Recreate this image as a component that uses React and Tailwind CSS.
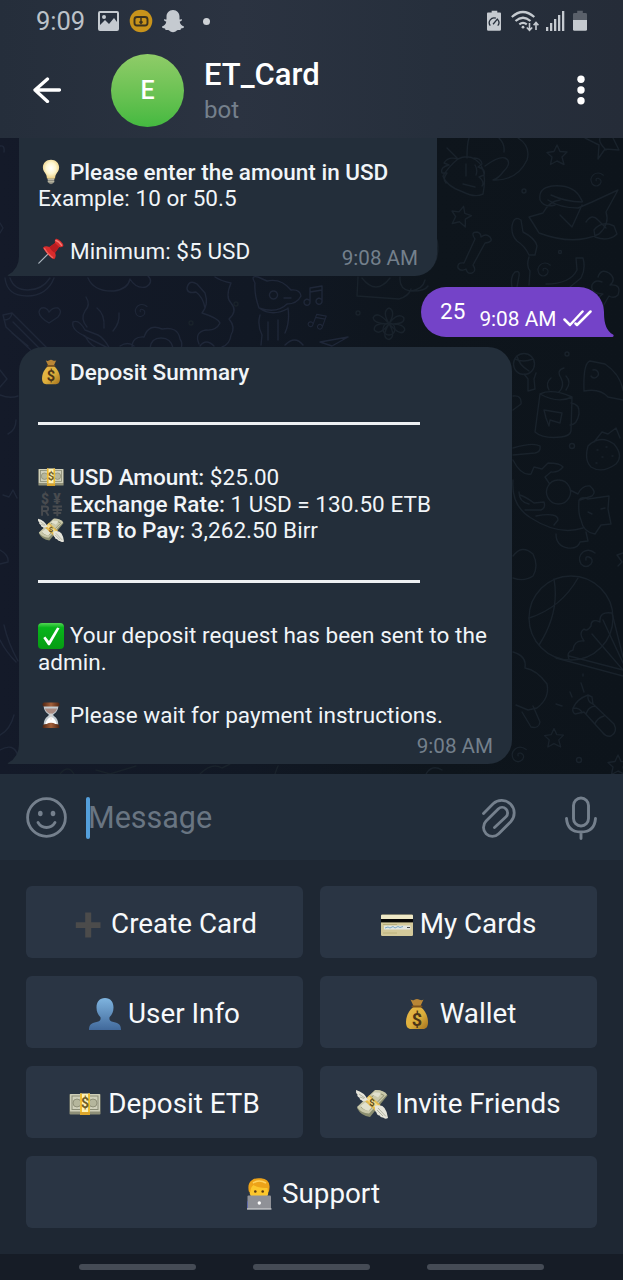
import React from 'react';

/* ---------- Emoji drawings (all on a 32 x 32 grid) ---------- */

function Emoji({ size, children }) {
  return (
    <svg
      aria-hidden="true"
      viewBox="0 0 32 32"
      className={size === 'lg' ? 'mt-1 h-8 w-8 shrink-0 overflow-visible' : 'h-[26px] w-[26px] shrink-0 overflow-visible'}
    >
      {children}
    </svg>
  );
}

function Bulb(props) {
  return (
    <Emoji {...props}>
      <defs>
        <radialGradient id="bulb" cx="0.5" cy="0.45" r="0.6">
          <stop offset="0" stopColor="#ffffff" />
          <stop offset="0.5" stopColor="#fdf6cf" />
          <stop offset="1" stopColor="#e9c877" />
        </radialGradient>
      </defs>
      <path d="M12 23h8v5q-1.500 3-4 3t-4-3z" fill="#8d8c80" />
      <path d="M12 25h8M12 28h8" stroke="#d0ccb4" strokeWidth="1" />
      <path d="M16 1c6 0 10 4 10 9.500 0 4-2.500 6-4 9-.7 1.500-.8 2.500-1 4.500H11c-.2-2-.3-3-1-4.500-1.500-3-4-5-4-9C6 5 10 1 16 1z" fill="url(#bulb)" />
    </Emoji>
  );
}

function Pushpin(props) {
  return (
    <Emoji {...props}>
      <path d="M13 19 1 31" stroke="#a9b4bd" strokeWidth="1.500" strokeLinecap="round" />
      <path d="M6 12q3-3 8-1l7-5q-1-3 1-5 2-1 6 3t3 6q-2 2-5 1l-5 7q2 5-1 8-3 0-8-6t-6-8z" fill="#d92c2c" />
      <path d="M14 11l7-5 5 5-5 7q-4-1-7-7z" fill="#b81c20" />
      <path d="M22 3q4 1 7 6" stroke="#f47a74" strokeWidth="1.800" fill="none" strokeLinecap="round" />
      <path d="M8 13q3 6 10 11" stroke="#f06660" strokeWidth="1.600" fill="none" strokeLinecap="round" />
    </Emoji>
  );
}

function MoneyBag(props) {
  return (
    <Emoji {...props}>
      <defs>
        <linearGradient id="bag" x1="0" y1="0" x2="1" y2="1">
          <stop offset="0" stopColor="#e9b94a" />
          <stop offset="0.55" stopColor="#dcae3b" />
          <stop offset="1" stopColor="#a2701d" />
        </linearGradient>
      </defs>
      <path d="M9.500 1.500q2 1.500 4 .3 2.500-1.500 5 0 2.500 1 4-.3L19.500 8h-7z" fill="#b98636" />
      <path d="M12.500 9h7c4.500 3 7.500 9 7.500 15 0 5-2 7-5 7H10c-3 0-5-2-5-7 0-6 3-12 7.500-15z" fill="url(#bag)" />
      <path d="M11.500 8.500h9" stroke="#7d521c" strokeWidth="1.800" strokeLinecap="round" />
      <text x="16" y="27.500" textAnchor="middle" fontFamily="Roboto, sans-serif" fontWeight="700" fontSize="18" fill="#4b3418">$</text>
    </Emoji>
  );
}

function Banknote(props) {
  return (
    <Emoji {...props}>
      <rect x=".5" y="6" width="31" height="20.500" rx=".8" fill="#8e8f77" />
      <rect x="1" y="6" width="30" height="17.500" rx=".5" fill="#cfcfb9" />
      <rect x="3" y="8" width="26" height="13.500" fill="none" stroke="#8b8d76" strokeWidth="1" />
      <circle cx="8" cy="15" r="4" fill="#b5b69c" stroke="#85876e" strokeWidth=".8" />
      <circle cx="24" cy="15" r="4" fill="#b5b69c" stroke="#85876e" strokeWidth=".8" />
      <rect x="11" y="5.500" width="10" height="18.500" fill="#fff2b5" />
      <path d="M11 5.500h2v18.500h-2zM19 5.500h2v18.500h-2z" fill="#f0bd32" />
      <rect x="11" y="24" width="10" height="3" fill="#dda62c" />
      <text x="16" y="20" textAnchor="middle" fontFamily="Roboto, sans-serif" fontWeight="700" fontSize="14" fill="#6f5d28">$</text>
    </Emoji>
  );
}

function WingedMoney(props) {
  return (
    <Emoji {...props}>
      <path d="M1 20 20 2q8 0 11.500 5.500L14 29Q5 28 1 20z" fill="#8b8e70" />
      <path d="M1 19 19 2q8-.5 12 4.500L13 25.500Q5 25 1 19z" fill="#c9c8aa" />
      <path d="M5 19 20 5q5 0 8 2.500L13 22.500q-5-.5-8-3.500z" fill="none" stroke="#8f916f" strokeWidth="1" />
      <path d="M18 4.500q4-1 7 1l-3 4q-2-2-6-2.500zM4.500 18l5-4 6 5.500-3 3.500q-5-1-8-5z" fill="#e2e1cd" />
      <path d="m8.500 12.500 5-5.500 11 10-5 6z" fill="#e4b94c" />
      <path d="m10.500 11.500 2.500-3 10 9.500-2.500 3z" fill="#f3db8e" />
      <path d="M12 12Q8 4 0 2q-.5 3 1.500 4.500-.8 2 2 3.200-.2 2 2.500 2.800 0 1.700 6-.5z" fill="#e6e5da" />
      <path d="M19 18q11-4 13 12-3 1.500-5-.5-2 .5-3.500-2-2.500 0-3-3-2-1-1.500-6.500z" fill="#e6e5da" />
      <path d="M3 6l6 4M4 9l4 1.500M22 20l8 8.500M21 22l6 6" stroke="#aaab98" strokeWidth=".9" />
      <text x="16" y="18" textAnchor="middle" fontFamily="Roboto, sans-serif" fontWeight="700" fontSize="9.500" fill="#5d4b1c">$</text>
    </Emoji>
  );
}

function CurrencyExchange(props) {
  return (
    <Emoji {...props}>
      <g fontFamily="Roboto, Noto Sans, sans-serif" fontWeight="900" fontSize="17" fill="#484b4f" textAnchor="middle">
        <text x="8.500" y="16">$</text>
        <text x="23.500" y="16">¥</text>
      </g>
      <g fill="none" stroke="#484b4f" strokeWidth="2.400">
        <path d="M5 30.500V19h4q3.500 0 3.500 2.800T9 24.500H5M9 24l4 6.500" />
        <path d="M18 19h11.500M18 23.500h11.500M23.800 18v13M19 27h9.500" />
      </g>
    </Emoji>
  );
}

function CheckBox(props) {
  return (
    <Emoji {...props}>
      <defs>
        <linearGradient id="tick" x1="0" y1="0" x2="0" y2="1">
          <stop offset="0" stopColor="#53d653" />
          <stop offset="0.18" stopColor="#08b41c" />
          <stop offset="1" stopColor="#069c12" />
        </linearGradient>
      </defs>
      <rect width="32" height="32" rx="5" fill="url(#tick)" />
      <path d="M6.500 18.500 9 16.500l4.500 5.500L23.500 5.500l3 1L14.500 27.500h-2z" fill="#fff" />
    </Emoji>
  );
}

function Hourglass(props) {
  return (
    <Emoji {...props}>
      <defs>
        <linearGradient id="wood" x1="0" y1="0" x2="1" y2="0">
          <stop offset="0" stopColor="#4d2412" />
          <stop offset="0.5" stopColor="#a3603a" />
          <stop offset="1" stopColor="#4d2412" />
        </linearGradient>
      </defs>
      <path d="M7 5h18q0 6-5 9.500-2.500 1.500 0 3Q25 21 25 28H7q0-7 5-10.500 2.500-1.500 0-3Q7 11 7 5z" fill="#c3cbd0" />
      <path d="M8.500 8h15q-1 4-6 6.500h-3Q9.500 12 8.500 8z" fill="#a98b82" />
      <path d="M16 18q6 3 7 9H9q1-6 7-9z" fill="#fff" />
      <path d="M16 14v8" stroke="#e2d3c8" strokeWidth="1" />
      <rect x="5.500" y=".5" width="21" height="5" rx="2" fill="url(#wood)" />
      <path d="M5.500 31q0-4 5-4 5.500-3 11 0 5 0 5 4 0 1-1 1h-19q-1 0-1-1z" fill="url(#wood)" />
    </Emoji>
  );
}

function PlusSign(props) {
  return (
    <Emoji {...props}>
      <path d="M13.200 4.500h6v9.700h9.300v5.700h-9.300v9.600h-6v-9.600H3.800v-5.700h9.400z" fill="#4b4b4b" />
    </Emoji>
  );
}

function CreditCard(props) {
  return (
    <Emoji {...props}>
      <rect y="6.500" width="32" height="21.500" rx="1.200" fill="#d3c99a" />
      <rect y="7" width="32" height="4.500" rx="1" fill="#eee8c6" />
      <rect y="11" width="32" height="3.400" fill="#080808" />
      <path d="M2 16.500h14" stroke="#aaa06d" strokeWidth=".7" />
      <rect x="3" y="17.500" width="26.500" height="4" rx=".5" fill="#e2e6e2" />
      <path d="m4 20 3-1 2 1 3-1.500 2 1.500 3-1.500 2 1 3-1" fill="none" stroke="#6d9fc0" strokeWidth=".9" />
      <path d="M26 19.500h3" stroke="#33383b" strokeWidth=".9" />
      <path d="M2 25h14" stroke="#b8ad77" strokeWidth=".8" />
    </Emoji>
  );
}

function Bust(props) {
  return (
    <Emoji {...props}>
      <defs>
        <linearGradient id="bust" x1="0" y1="0" x2="0" y2="1">
          <stop offset="0" stopColor="#7fb4df" />
          <stop offset="1" stopColor="#41699b" />
        </linearGradient>
      </defs>
      <path d="M16 0c5.500 0 8.500 4 8.500 9.500 0 4-1.500 7.500-4 9.700-.5 3 .5 4 4 4.800C30 25 32 27 32 32H0c0-5 2-7 7.500-8 3.500-.8 4.500-1.800 4-4.800-2.500-2.200-4-5.700-4-9.700C7.500 4 10.500 0 16 0z" fill="url(#bust)" />
    </Emoji>
  );
}

function Technologist(props) {
  return (
    <Emoji {...props}>
      <path d="M4 31v-6q0-4 6-5h12q6 1 6 5v6z" fill="#2a3fbd" />
      <path d="M6.500 10q0-8 9.500-8t9.500 8v3q0 9-9.500 9t-9.500-9z" fill="#fcc72c" />
      <path d="M6 14Q4 6 8.500 2.500 12-.5 18 .3q8 .7 8.500 7.700.2 3-.8 6-1.200-1-1.200-4-9 .5-14-3-3 2-3 6.500z" fill="#eda319" />
      <path d="M10 5q6-4 13 0" fill="none" stroke="#ffd25c" strokeWidth="1.600" />
      <circle cx="12.300" cy="13.500" r="1.300" fill="#5a3a13" />
      <circle cx="19.700" cy="13.500" r="1.300" fill="#5a3a13" />
      <rect x="4.500" y="17.500" width="23.500" height="13.500" rx="1" fill="#8f9197" />
      <rect x="4" y="30" width="24.500" height="1.800" rx=".6" fill="#b4b6ba" />
      <circle cx="16.300" cy="25" r="1.700" fill="#fff" />
    </Emoji>
  );
}

/* ---------- Chat wallpaper ---------- */

const STAR = 'M0-10 3-3.500 10-3 5 2 7 9.500 0 6-6.500 9.500-5 2-10-2.500-3-3.500z';
const SPIRAL = 'M-1 1q-1-4 3-3 5 2 2 7-5 5-10 0-4-7 2-12 6-4 12 1';
const FLOWER =
  'M0-5q-7-12 0-15 7 3 0 15 8-11 14-6 2 7-14 6 15 0 15 6-3 7-15-6 7 12 0 15-8-2 0-15-9 12-14 6-1-7 14-6-15 0-15-6 4-7 15 6z';
const NOTE = 'M-6 6V-8L6-10V5M-6-4 6-6M-6 6a3 3 0 1 1-1-2M6 5a3 3 0 1 1-1-2';

function Wallpaper() {
  return (
    <svg
      aria-hidden="true"
      viewBox="0 138 623 636"
      className="absolute inset-0 h-full w-full"
      fill="none"
      strokeWidth="1.400"
      strokeLinecap="round"
      strokeLinejoin="round"
    >
      <g stroke="#1f2738">
        <path d="M5 278q2 18 22 18t27-18M10 278q4 12 18 12t22-12M88 278q6 14 26 13 14-2 16-12 6 10 16 8 8-5 2-11" />
        <path d="M49 323q-10-6-10-11 1-5 6-4 3 1 4 4 4-5 9-4 5 3 0 9z" />
        <path d="M3 315 12 313l36 36M3 315l3 12 28 26M12 313q-1 7-8 7M13 322l28 28" />
        <path d="M73 322q6-3 12 8l13 5q6 3 12 14M73 322q-2 8 12 14 6 12 18 14M86 297q5 8-1 14-5 8 2 16M119 313q1 10-6 18M84 336l26 13M97 308q8 6 7 20" />
        <path transform="translate(141 311) scale(.75)" d={SPIRAL} />
        <path d="M132 348q0-12 12-11 5-14 18-8 16-3 18 10 3 4 1 9M150 348q1-10 11-10t12 10" />
        <path d="M187 288q2-9 10-4l8 9q4 12-3 20 16 5 18 10-4 8-14 7-12 2-7 14M187 288q0 6 9 4 7 5 9 16M215 277q6 4 16 6-6 14 0 20 7 8-2 16 7 8 2 16-1 9-9 12" />
        <path d="M255 283q-5-8 3-6l9 4q14-3 24 9 9-1 10 6-4 8-14 8-10 10-28 4-5-14-4-25zM259 308q13 9 28 1M260 315q-3 10 2 20l-1 10M288 308q2 14-3 25M268 322v18M278 320v20M273 291a4 4 0 1 0 1 0M284 298h7" />
        <path transform="translate(316 296)" d={NOTE} />
        <path transform="translate(319 322) rotate(20) scale(.8)" d={NOTE} />
        <path d="M285 345q10-10 18 0M320 342l28-5-16 9z" />
        <path d="M0 370l7 9-7 8M0 395q10 4 18 1M8 434q8-4 8-14M3 495l6 2 4-7 4 8M0 550q9 5 8 12l-8 2M0 640q6 12 16 22M4 625q4 18 14 36M0 735q10-5 14-20M0 750q14-8 18 6" />
        <path d="M0 146q5-1 4 6M0 223l3 5-3 5" />
        <path d="M28 346 12 333M120 346q8-5 14 0M200 346q6-8 14 0" />
      </g>
      <g stroke="#19222b">
        <path transform="translate(389 329) scale(1.050)" d={FLOWER} />
        <circle cx="389" cy="329" r="6" />
        <path d="M358 277l-1 19 42 3q10-3 12-10M362 278q14 18 28 0M400 277q-1 12 10 14 14 1 18-5M411 291q12-2 14-11M437 240q2 10-1 20" />
        <path d="M447 148l11 11q10-5 18 1 12 8 7 34-8 4-20-2-17-6-20-16 6-10 15-17M458 159q-10-3-14 4l5 2q-9 2-7 8l5 0q-5 6-1 10M474 158q7 0 8 6l-4 3q8 2 6 8l-5 2q6 5 3 9M466 164v12M475 165q3 5 1 10M463 184l12 3M467 158q0-14 2-20M485 166q14-10 20-8 8 4-2 14-4 6-10 8 24 1 34-20 4-14-9-22M499 138q6 6 5 14" />
        <path transform="translate(557 155)" d={STAR} />
        <path transform="translate(461 216) rotate(15)" d={STAR} />
        <path transform="translate(597 180) scale(.8)" d={SPIRAL} />
        <path transform="translate(544 270) scale(.8)" d={SPIRAL} />
        <path d="M475 239q-5-7 2-7 4 1 4 5 5-4 9 0 4 5-5 6l-12 22q4 6-1 8-5 1-6-4-5 3-8-1-1-6 6-5z" />
        <path d="M585 138l14 7-1 14 7-10 14 1-6-12M600 138q-2 4 6 12" />
        <path d="M512 226q2-11 9-6l2 12q12 6 14 14l-2 9-6 0q-4-9-12-14-6-6-5-15zM529 257q-3 9 1 14l-1 14M512 287q-2-10 3-15 5-2 4 4l-2 11M546 284q24 0 31-14l-1-12h7q3 11-2 20l-11 9" />
        <path d="M540 200q-2-12 12-14 22-2 29 13 2 3 1 3-16 0-31-7M540 200q4 8 15 5M548 200q12 8 30 8l14-6 26-12-12 22q4 12-7 22-25 12-60-1-6-10-10-16l14-4q6-12 17-13M560 215l12 12 10-22M586 222q6-9 12-2l8 8M594 230q8-10 20-4l3 8q-8 8-22 3z" />
        <path d="M598 277q3-9 11-4 8 6 1 12 12-1 8 10-4 4-9 1l-7 12q-7 4-8-4 4-7 9-10-13-1-11-9 3-6 10-3" />
        <circle cx="524" cy="364" r="10.500" />
        <path d="M515 359q8 4 18 0M524 374l4 5 0 12 7-2-1-10 2-6M517 356q2 9 12 15" />
        <path d="M540 394l-5 38q8 7 26 5 9-1 10-6l1-34q-14 7-32-3zM540 394q12-6 32 3M571 403q9 1 8 11-2 11-9 11M544 410l18 3-2 10-10-3-1 6-3-8zM549 390q-4-7 2-12M559 392q6-6 2-14-5-8 3-10M566 390q6-8 0-14" />
        <path d="M584 391q-1-28 6-30l15 3q15 10 18 26M584 391q16-3 24 6l15 3M591 376a4 4 0 1 0 2-6" />
        <path d="M588 446q12-12 26-2 10 12 2 20-14 10-25 3-7-7-3-21zM594 442l8-10 6 2 8-6 4 10M597 450h1M606 447h1M602 457h1M612 456h1M596 463h1" />
        <path d="M513 460q8 16 18 14l3-7 8 2 6-6q12 0 15 4-5 6-12 5l-6 5 4 6M513 480q-2 26 18 38 28 18 52 10M519 492q0 10 10 12M520 495q6 2 14 8l10-1q2 6-3 8l-16 0M558 480a12 12 0 1 0 1 0M570 490l8 4q4-9 12-8 7 6 2 10l-12 4M579 500q2-4 9-1l21-3-1 13 3 15-10 1-6 9q-12-2-14-14-3-6-2-20zM588 512l4 2M601 509l4-1M536 516q22-4 22 4l-4 5M556 534q0 12 12 14 10 1 12-6l8-1-2-9" />
        <path transform="translate(587 559)" d={SPIRAL} />
        <path d="M617 555l6-2M617 555l5 7-4 4M513 556q9-12 20-2 6 12 0 22-9 6-20 2" />
        <circle cx="571" cy="618" r="42" />
        <path d="M554 579q6 33-15 66M529 618q32-10 49-40M612 613q-13-2-12 9-9-4-9 4-4 6-7 3-6 4 0 12-10-1-11 9-7 2-4 9M612 613l11 44M603 620l20 43M592 634l31 36M556 658l67 18M569 656l54 14" />
        <path d="M513 652q14 4 12 16 12 2 22 16 3 14-10 24l-9 2-12-5M522 712l9 15q8 2 9-5l-7-16" />
        <path d="M573 708q4-9 15-13l4 2 1 7 21 20q4 8-3 12-5 1-8-3l-19-21-9 2q-3-2-2-6zM573 708q8 0 9 5M588 695q-1 7 5 9M595 706q-7 1-9 8M604 716q-7 2-9 8M572 697l-2-5M584 692l-3-9M562 706l-6-2M583 676v-2" />
        <path transform="translate(554 738) scale(.95)" d={STAR} />
        <path transform="translate(519 755) scale(.9)" d={SPIRAL} />
        <path transform="translate(618 765)" d={STAR} />
        <path d="M513 448q20-6 27-2 1 6-5 7l-22 2M513 396q9-1 8 8l-8 6M426 774q6-10 16-4M200 774q12-12 22-6l8-4M275 774q2-6 3-8M60 774q8-10 14 0M96 770l14 4 26-8" />
        <circle cx="579" cy="760" r="2.500" />
        <circle cx="567" cy="354" r="2" />
        <circle cx="572" cy="446" r="2.500" />
        <circle cx="560" cy="252" r="1.500" />
        <circle cx="524" cy="191" r="2" />
        <circle cx="358" cy="313" r="2" />
        <circle cx="236" cy="304" r="2" />
        <circle cx="191" cy="323" r="2" />
      </g>
    </svg>
  );
}

/* ---------- Header ---------- */

function StatusBar() {
  return (
    <div className="flex h-[42px] items-center pl-9 pr-9 text-[#c5cad0]">
      <span className="mt-[2px] w-[51px] whitespace-nowrap text-[25.5px] leading-none text-[#bcc2c9]">9:09</span>
      <svg aria-hidden="true" viewBox="0 0 21 20" className="ml-[11px] h-5 w-[21px]">
        <path fillRule="evenodd" fill="currentColor" d="M2 0h17q2 0 2 2v16q0 2-2 2H2q-2 0-2-2V2q0-2 2-2zm0 2v12l5-5 4 4 5-6 3 4V2zM6 4a2 2 0 1 1 0 4 2 2 0 0 1 0-4z" />
      </svg>
      <svg aria-hidden="true" viewBox="0 0 24 24" className="ml-[10px] h-6 w-6">
        <circle cx="12" cy="12" r="11.300" fill="#c8931b" />
        <rect x="5.500" y="8" width="13" height="8.500" rx="2.500" fill="none" stroke="#3b321f" strokeWidth="1.900" />
        <path d="M12 8v5M10.500 12.500l1.500 2 1.500-2" fill="none" stroke="#3b321f" strokeWidth="1.500" />
      </svg>
      <svg aria-hidden="true" viewBox="0 0 24 24" className="ml-2 h-[24px] w-6">
        <path fill="currentColor" d="M12 1c4 0 6.500 3 6.500 6.500v3c1 0 2-.8 2.500.1.300 1-1 1.600-2.300 2.200.5 2.500 2 4 4.300 4.700.3 1.500-1.500 1.800-3 2.100l-.6 1.500c-1.200 0-2.400-.3-3.600.5-1.200.9-2.300 1.600-3.800 1.600s-2.600-.7-3.800-1.600c-1.200-.8-2.400-.5-3.600-.5L4 19.600c-1.500-.3-3.300-.6-3-2.100 2.300-.7 3.800-2.200 4.300-4.700C4 12.200 2.700 11.600 3 10.600c.5-.9 1.500-.1 2.500-.1v-3C5.500 4 8 1 12 1z" />
      </svg>
      <span className="ml-[18px] h-[7px] w-[7px] rounded-full bg-[#ced2d6]" />

      <svg aria-hidden="true" viewBox="0 0 15 22" className="ml-auto h-[22px] w-[14px]">
        <path fill="currentColor" d="M5 0h6v2h3q1 0 1 1v17q0 1.500-1.500 1.500h-12Q0 21.500 0 20V3q0-1 1-1h4z" />
        <path d="M3.500 16a5.200 5.200 0 0 1 6-8M11.500 9.500a5 5 0 0 1 0 6.500M6.500 14.500l5-6" fill="none" stroke="#262f3b" strokeWidth="1.400" />
      </svg>
      <svg aria-hidden="true" viewBox="0 0 28 22" className="ml-[10px] h-[22px] w-[28px]" fill="none" stroke="currentColor" strokeWidth="2.200">
        <path d="M.8 7q11-10 22.500 0M4.500 11q7.500-6.500 15 0M8.300 14.300q3.700-2.800 7.500 0" />
        <circle cx="12" cy="17.200" r="1.400" fill="currentColor" stroke="none" />
        <path d="M18.500 13v7M15.800 17.500l2.700 2.800 2.700-2.800M25 20v-7M22.600 15.300l2.400-2.800 2.400 2.800" strokeWidth="1.600" />
      </svg>
      <svg aria-hidden="true" viewBox="0 0 19 20" className="ml-[7px] h-5 w-[19px]" fill="currentColor">
        <path d="M0 16h2.300v4H0zM4 12h2.300v8H4zM8 8h2.300v12H8zM12 4h2.300v16H12zM16 0h2.300v20H16z" />
      </svg>
      <svg aria-hidden="true" viewBox="0 0 15 22" className="ml-2 h-[22px] w-[14px]">
        <path fill="#5a606a" d="M4.500 0h6v2.500h3q1.500 0 1.500 1.500v6H0V4q0-1.500 1.500-1.500h3z" />
        <path fill="currentColor" d="M0 10h15v10q0 1.500-1.500 1.500h-12Q0 21.500 0 20z" />
      </svg>
    </div>
  );
}

function Header() {
  return (
    <header className="h-[138px] shrink-0 bg-[linear-gradient(90deg,#252e3b_0%,#2b3341_38%,#262f3c_70%,#252c38_100%)]">
      <StatusBar />
      <div className="flex h-24 items-center pl-[33px] pr-[38px]">
        <svg aria-hidden="true" viewBox="0 0 28 26" className="h-[26px] w-7" fill="none" stroke="#fff" strokeWidth="3.300" strokeLinecap="round" strokeLinejoin="round">
          <path d="M26.500 13H2M14.500 2 2 13l12.500 11.500" />
        </svg>
        <div className="ml-[50px] flex h-[73px] w-[73px] items-center justify-center rounded-full bg-gradient-to-b from-[#8fcc68] to-[#43b940] text-[25px] font-medium leading-none text-white">
          <span className="mt-px">E</span>
        </div>
        <div className="ml-5 mt-[3px] flex flex-col">
          <h1 className="whitespace-nowrap text-[31px] font-medium leading-9 text-white">ET_Card</h1>
          <span className="text-[24px] leading-[34px] text-[#75808c]">bot</span>
        </div>
        <svg aria-hidden="true" viewBox="0 0 8 30" className="ml-auto h-[30px] w-2" fill="#fff">
          <circle cx="4" cy="4.300" r="3.700" />
          <circle cx="4" cy="15" r="3.700" />
          <circle cx="4" cy="25.700" r="3.700" />
        </svg>
      </div>
    </header>
  );
}

/* ---------- Messages ---------- */

function Line({ emoji, children }) {
  return (
    <p className="flex h-[26.38px] items-center gap-[6px] whitespace-nowrap">
      {emoji}
      <span>{children}</span>
    </p>
  );
}

function Rule() {
  return (
    <div className="flex h-[26.38px] items-center pb-[2px]">
      <div className="h-[3px] w-[382px] bg-[#eef1f3]" />
    </div>
  );
}

function Strong({ children }) {
  return <b className="font-medium tracking-normal">{children}</b>;
}

function IncomingTail() {
  return (
    <svg aria-hidden="true" viewBox="0 0 24 24" className="absolute -left-[12px] bottom-0 h-6 w-6">
      <path d="M12 0v4Q12 17 1 23q-1 1 1 1h22V0z" fill="#232e3a" />
    </svg>
  );
}

function Chat() {
  return (
    <main className="relative h-[636px] shrink-0 overflow-hidden bg-[linear-gradient(90deg,#141a29_0%,#111824_40%,#0e151c_70%,#0d141b_100%)]">
      <Wallpaper />
      <div className="relative flex flex-col text-[22.5px] leading-[26.38px] tracking-[0.05px] text-[#f1f5f8]">
        <section className="relative ml-[19px] h-[138px] w-[418px] rounded-br-[22px] bg-[#232e3a] px-[19px] pt-[20.5px]">
          <IncomingTail />
          <div className="relative">
            <Line emoji={<Bulb />}><Strong>Please enter the amount in USD</Strong></Line>
            <Line>Example: 10 or 50.5</Line>
            <Line />
            <Line emoji={<Pushpin />}>Minimum: $5 USD</Line>
            <time className="absolute bottom-[-7px] right-0 text-[20.6px] tracking-normal text-[#74808c]">9:08 AM</time>
          </div>
        </section>

        <section className="relative ml-[421px] mt-[11px] flex h-[50px] w-[183px] items-center rounded-[25px] rounded-br-none bg-[#7443c8] pl-[19px]">
          <svg aria-hidden="true" viewBox="0 0 10 24" className="absolute -right-[9.500px] bottom-0 h-6 w-2.5">
            <path d="M0 0q0 17 9 21.500 1.500 1.500-.5 2.500H0z" fill="#7443c8" />
          </svg>
          <span className="-mt-px text-white">25</span>
          <time className="ml-[14px] mt-[14px] whitespace-nowrap text-[20.8px] tracking-normal text-white">9:08 AM</time>
          <svg aria-hidden="true" viewBox="0 0 29 17" className="ml-[7px] mt-3 h-[17px] w-[29px]" fill="none" stroke="#fff" strokeWidth="2.500" strokeLinecap="round" strokeLinejoin="round">
            <path d="M1.500 9.500 7 15 19.500 1.500M12.500 13.500l1.500 1.500L27.500 1.500" />
          </svg>
        </section>

        <section className="relative ml-[19px] mt-[10px] h-[417px] w-[493px] rounded-r-[24px] rounded-tl-[24px] bg-[#232e3a] px-[19px] pt-[11.7px]">
          <IncomingTail />
          <div className="relative">
            <Line emoji={<MoneyBag />}><Strong>Deposit Summary</Strong></Line>
            <Line />
            <Rule />
            <Line />
            <Line emoji={<Banknote />}><Strong>USD Amount:</Strong> $25.00</Line>
            <Line emoji={<CurrencyExchange />}><Strong>Exchange Rate:</Strong> 1 USD = 130.50 ETB</Line>
            <Line emoji={<WingedMoney />}><Strong>ETB to Pay:</Strong> 3,262.50 Birr</Line>
            <Line />
            <Rule />
            <Line />
            <Line emoji={<CheckBox />}>Your deposit request has been sent to the</Line>
            <Line>admin.</Line>
            <Line />
            <Line emoji={<Hourglass />}>Please wait for payment instructions.</Line>
            <time className="mt-[5.3px] block text-right text-[20.6px] tracking-normal text-[#74808c]">9:08 AM</time>
          </div>
        </section>
      </div>
    </main>
  );
}

/* ---------- Composer and reply keyboard ---------- */

function Composer() {
  return (
    <div className="flex h-[86px] shrink-0 items-center bg-[#222d3a] pl-[26px] pr-[25px] pt-px text-[#75808d]">
      <svg aria-hidden="true" viewBox="0 0 41 41" className="h-[41px] w-[41px]" fill="none" stroke="currentColor" strokeWidth="2.800" strokeLinecap="round">
        <circle cx="20.500" cy="20.500" r="18.900" />
        <path d="M12 25.500q3 5 8.500 5t8.500-5" />
        <ellipse cx="14.300" cy="16.500" rx="2.300" ry="2.800" fill="currentColor" stroke="none" />
        <ellipse cx="27" cy="16.500" rx="2.300" ry="2.800" fill="currentColor" stroke="none" />
      </svg>
      <div className="ml-[19px] h-[42px] w-[4px] rounded-sm bg-[#549fdb]" />
      <span className="-ml-[2px] mt-[2px] text-[30.5px] leading-none text-[#697582]">Message</span>
      <svg aria-hidden="true" viewBox="0 0 36 40" className="ml-auto h-10 w-9" fill="none" stroke="currentColor" strokeWidth="2.800" strokeLinecap="round">
        <path d="M2.500 15.500 12.100 5.700A12.600 12.600 0 0 1 29.900 23.500L17.700 35.700A8.900 8.900 0 0 1 5.100 23.100L17.200 11A5.500 5.500 0 0 1 25 18.800L13.500 29.500" />
      </svg>
      <svg aria-hidden="true" viewBox="0 0 34 44" className="ml-[47px] h-11 w-[34px]" fill="none" stroke="currentColor" strokeWidth="2.900" strokeLinecap="round">
        <rect x="9.500" y="2" width="15" height="28" rx="7.500" />
        <path d="M2.500 22.500Q3.500 36 17 36t14.500-13.500M17 36v6.500" />
      </svg>
    </div>
  );
}

function Key({ emoji, children, wide }) {
  return (
    <button
      type="button"
      className={
        'flex h-[72.5px] items-center justify-center gap-[7px] whitespace-nowrap rounded-[6px] bg-[#2a3544] text-[27.8px] leading-8 text-[#f7f9fb] ' +
        (wide ? 'col-span-2' : '')
      }
    >
      {emoji}
      <span className="mt-[5px]">{children}</span>
    </button>
  );
}

function ReplyKeyboard() {
  return (
    <div className="grid h-[394px] shrink-0 grid-cols-2 content-start gap-x-[17px] gap-y-[17.5px] bg-[#1e2733] px-[26px] pt-[25.5px]">
      <Key emoji={<PlusSign size="lg" />}>Create Card</Key>
      <Key emoji={<CreditCard size="lg" />}>My Cards</Key>
      <Key emoji={<Bust size="lg" />}>User Info</Key>
      <Key emoji={<MoneyBag size="lg" />}>Wallet</Key>
      <Key emoji={<Banknote size="lg" />}>Deposit ETB</Key>
      <Key emoji={<WingedMoney size="lg" />}>Invite Friends</Key>
      <Key wide emoji={<Technologist size="lg" />}>Support</Key>
    </div>
  );
}

function NavigationBar() {
  return (
    <div className="flex h-[26px] shrink-0 items-center justify-center gap-[57px] bg-[#161c26]">
      <span className="h-[6px] w-[117px] rounded-full bg-[#454b55]" />
      <span className="h-[6px] w-[117px] rounded-full bg-[#454b55]" />
      <span className="h-[6px] w-[117px] rounded-full bg-[#454b55]" />
    </div>
  );
}

export default function App() {
  return (
    <div className="flex h-[1280px] w-[623px] flex-col overflow-hidden bg-[#1e2733] font-[Roboto,'Noto_Sans',sans-serif]">
      <Header />
      <Chat />
      <Composer />
      <ReplyKeyboard />
      <NavigationBar />
    </div>
  );
}
